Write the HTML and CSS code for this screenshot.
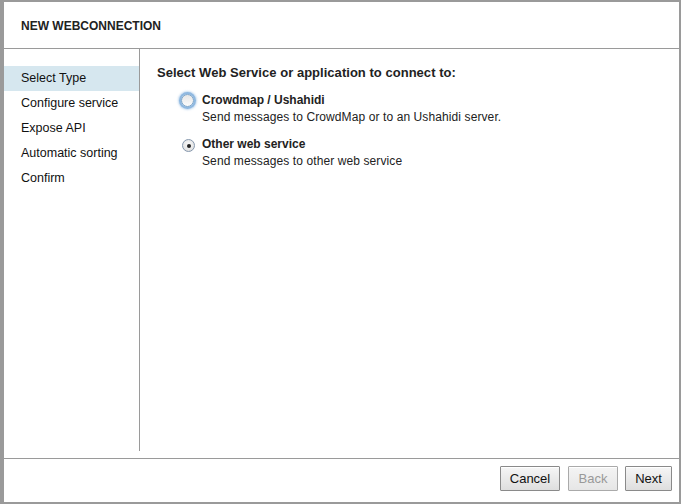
FILE: index.html
```html
<!DOCTYPE html>
<html>
<head>
<meta charset="utf-8">
<link rel="stylesheet" href="styles.css">
</head>
<body>
<div class="dialog">
  <div class="header"><h1 class="title">NEW WEBCONNECTION</h1></div>
  <div class="main">
    <ul class="steps">
      <li class="step active">Select Type</li>
      <li class="step">Configure service</li>
      <li class="step">Expose API</li>
      <li class="step">Automatic sorting</li>
      <li class="step">Confirm</li>
    </ul>
    <div class="content">
      <h2 class="question">Select Web Service or application to connect to:</h2>
      <div class="option">
        <span class="radio focus"></span>
        <div class="option-text">
          <div class="option-label">Crowdmap / Ushahidi</div>
          <div class="option-desc">Send messages to CrowdMap or to an Ushahidi server.</div>
        </div>
      </div>
      <div class="option">
        <span class="radio checked"></span>
        <div class="option-text">
          <div class="option-label">Other web service</div>
          <div class="option-desc">Send messages to other web service</div>
        </div>
      </div>
    </div>
  </div>
  <div class="footer">
    <button class="btn btn-cancel">Cancel</button>
    <button class="btn btn-back disabled">Back</button>
    <button class="btn btn-next">Next</button>
  </div>
</div>
</body>
</html>
```

FILE: styles.css
```css
html, body {
  margin: 0;
  padding: 0;
}
body {
  background: #9a9a9a;
  font-family: "Liberation Sans", Arial, sans-serif;
  color: #111;
  width: 681px;
  height: 504px;
  overflow: hidden;
}
.dialog {
  margin: 2px 2px 2px 4px;
  width: 675px;
  height: 500px;
  background: #fff;
  display: flex;
  flex-direction: column;
}
.header {
  height: 46px;
  border-bottom: 1px solid #9a9a9a;
  display: flex;
  align-items: center;
  padding-left: 17px;
}
.title {
  margin: 0;
  font-size: 12px;
  font-weight: bold;
  color: #222;
  padding-top: 2px;
}
.main {
  flex: 1;
  display: flex;
  border-bottom: 1px solid #9a9a9a;
}
.steps {
  list-style: none;
  margin: 0 0 7px 0;
  padding: 17px 0 0 0;
  width: 135px;
  border-right: 1px solid #9a9a9a;
}
.step {
  height: 25px;
  line-height: 25px;
  padding-left: 17px;
  font-size: 12.5px;
  color: #111;
}
.step.active {
  background: #d6e7ef;
}
.content {
  flex: 1;
  padding: 16px 0 0 17px;
}
.question {
  margin: 0 0 13px 0;
  font-size: 13px;
  font-weight: bold;
  color: #222;
  letter-spacing: 0.03px;
}
.option {
  display: flex;
  align-items: flex-start;
  margin-left: 24px;
  margin-bottom: 11px;
}
.radio {
  margin-right: 8px;
  flex: none;
  box-sizing: border-box;
  border-radius: 50%;
  position: relative;
}
.radio.focus {
  width: 13px;
  height: 13px;
  margin-top: 1px;
  border: 1px solid #7aa3c8;
  background: linear-gradient(#e6e6e6, #fbfbfb);
  box-shadow: 0 0 0 2px #8fb8e0, 0 0 2px 3px rgba(120,170,220,0.45);
}
.radio.checked {
  width: 13px;
  height: 13px;
  margin-top: 2px;
  margin-left: 1px;
  margin-right: 7px;
  border: 1px solid #8597ad;
  background: radial-gradient(circle at 50% 40%, #fafafa, #d8d8d8);
}
.radio.checked::after {
  content: "";
  position: absolute;
  left: 3.5px;
  top: 3.5px;
  width: 4px;
  height: 4px;
  border-radius: 50%;
  background: #222;
}
.option-label {
  font-size: 12px;
  font-weight: bold;
  color: #222;
  line-height: 15px;
}
.option-desc {
  font-size: 12px;
  color: #222;
  line-height: 18px;
  letter-spacing: 0.1px;
}
.footer {
  height: 43px;
  display: flex;
  justify-content: flex-end;
  align-items: flex-start;
  padding: 7px 7px 0 0;
  box-sizing: border-box;
}
.btn {
  height: 25px;
  padding: 0;
  font-family: "Liberation Sans", Arial, sans-serif;
  font-size: 13px;
  color: #111;
  border: 1px solid #8a8a8a;
  border-radius: 1px;
  background: linear-gradient(#f6f6f6, #dedede);
  box-shadow: inset 0 1px 0 #fff;
}
.btn-cancel { width: 60px; margin-right: 8px; }
.btn-back { width: 50px; margin-right: 7px; }
.btn-next { width: 47px; }
.btn.disabled {
  color: #999;
  border-color: #aaa;
  background: linear-gradient(#f4f4f4, #e6e6e6);
}
```
